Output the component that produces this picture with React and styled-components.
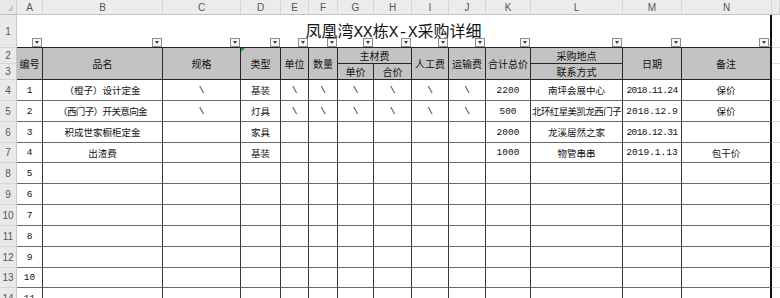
import React from "react";
import styled, { createGlobalStyle } from "styled-components";

// column widths A..N (N includes the thick 2px table edge)
const COLS = [26, 120, 78, 40, 28, 29, 36, 38, 37, 37, 45, 92, 59, 90];
const LETTERS = ["A", "B", "C", "D", "E", "F", "G", "H", "I", "J", "K", "L", "M", "N"];
const ROW_H = [21, 21, 21, 20, 21, 21, 21, 21, 21, 20, 21];
const NUMERIC = [0, 2, 4, 5, 6, 7, 8, 9, 10, 12];

const DATA = [
  ["1", "（橙子）设计定金", "\\", "基装", "\\", "\\", "\\", "\\", "\\", "\\", "2200", "南坪会展中心", "2018.11.24", "保价"],
  ["2", "（西门子）开关意向金", "\\", "灯具", "\\", "\\", "\\", "\\", "\\", "\\", "500", "北环红星美凯龙西门子", "2018.12.9", "保价"],
  ["3", "积成世家橱柜定金", "", "家具", "", "", "", "", "", "", "2000", "龙溪居然之家", "2018.12.31", ""],
  ["4", "出渣费", "", "基装", "", "", "", "", "", "", "1000", "物管串串", "2019.1.13", "包干价"],
  ...[5, 6, 7, 8, 9, 10, 11].map((n) => [String(n), "", "", "", "", "", "", "", "", "", "", "", "", ""]),
];

const GlobalStyle = createGlobalStyle`
  html, body {
    margin: 0;
    background: #fff;
    overflow: hidden;
  }
  body {
    font-family: "Noto Sans CJK SC", sans-serif;
  }
`;

const Sheet = styled.div`
  display: grid;
  grid-template-columns: 17px ${COLS.map((w) => w + "px").join(" ")} 1fr;
  grid-template-rows: 15px 33px 16px 16px ${ROW_H.map((h) => h + "px").join(" ")};
  width: 780px;
  height: 298px;
  overflow: hidden;
  > * {
    box-sizing: border-box;
    min-width: 0;
  }
`;

const Corner = styled.div`
  position: relative;
  background: #e9e9e9;
  border-right: 1px solid #cfcfcf;
  border-bottom: 1px solid #bdbdbd;
  &::after {
    content: "";
    position: absolute;
    right: 3px;
    bottom: 3px;
    border-left: 6px solid transparent;
    border-bottom: 6px solid #cacaca;
  }
`;

const ColHead = styled.div`
  display: flex;
  align-items: center;
  justify-content: center;
  background: #ececec;
  border-right: 1px solid #d6d6d6;
  border-bottom: 1px solid #c3c3c3;
  font: 10px "Liberation Sans", sans-serif;
  color: #555;
`;

const RowHead = styled.div`
  display: flex;
  align-items: center;
  justify-content: center;
  background: #e9e9e9;
  border-right: 1px solid #c6c6c6;
  border-bottom: 1px solid #d6d6d6;
  font: 10px "Liberation Sans", sans-serif;
  color: #555;
`;

const TitleCell = styled.div`
  grid-column: 2 / span 14;
  display: grid;
  grid-template-columns: ${COLS.slice(0, -1).map((w) => w + "px").join(" ")} 1fr;
  border-right: 2px solid #111;
  border-bottom: 1px solid #222;
`;

const Title = styled.div`
  grid-row: 1;
  grid-column: 1 / -1;
  align-self: end;
  justify-self: center;
  padding-bottom: 4px;
  font-family: "Liberation Mono", "Noto Sans CJK SC", monospace;
  font-size: 16px;
  line-height: 19px;
  color: #111;
`;

const FilterBtn = styled.span`
  grid-row: 1;
  grid-column: ${(p) => p.$col};
  align-self: end;
  justify-self: end;
  box-sizing: border-box;
  width: 10px;
  height: 9px;
  margin-right: 1px;
  display: flex;
  align-items: center;
  justify-content: center;
  background: #f6f6f6;
  border: 1px solid #8e8e8e;
  &::after {
    content: "";
    border-left: 2.5px solid transparent;
    border-right: 2.5px solid transparent;
    border-top: 3px solid #3c3c3c;
  }
`;

const HeadCell = styled.div`
  position: relative;
  grid-row: span ${(p) => p.$rs || 1};
  grid-column: span ${(p) => p.$cs || 1};
  display: flex;
  align-items: center;
  justify-content: center;
  background: #c3c3c3;
  border-right: ${(p) => (p.$last ? "2px solid #111" : "1px solid #262626")};
  border-bottom: 1px solid #262626;
  font-size: 10px;
  color: #111;
  white-space: nowrap;
  &::before {
    content: "";
    display: ${(p) => (p.$flag ? "block" : "none")};
    position: absolute;
    left: 0;
    top: 0;
    border-top: 4px solid #1f9d3f;
    border-right: 4px solid transparent;
  }
`;

const Cell = styled.div`
  display: flex;
  align-items: center;
  justify-content: center;
  border-right: ${(p) => (p.$last ? "2px solid #111" : "1px solid #3a3a3a")};
  border-bottom: 1px solid #6a6a6a;
  font-family: ${(p) =>
    p.$mono ? `"Liberation Mono", "Noto Sans CJK SC", monospace` : `"Noto Sans CJK SC", sans-serif`};
  font-size: 9.5px;
  letter-spacing: ${(p) => (p.$tight ? "-0.6px" : "0")};
  color: #111;
  white-space: nowrap;
  overflow: hidden;
`;

const Spare = styled.div`
  background: #fff;
  border-bottom: 1px solid #dcdcdc;
`;

export default function App() {
  return (
    <>
      <GlobalStyle />
      <Sheet>
        <Corner />
        {LETTERS.map((l) => (
          <ColHead key={l}>{l}</ColHead>
        ))}
        <ColHead />

        <RowHead>1</RowHead>
        <TitleCell>
          <Title>凤凰湾XX栋X-X采购详细</Title>
          {LETTERS.map((l, i) => (
            <FilterBtn key={l} $col={i + 1} />
          ))}
        </TitleCell>
        <Spare />

        <RowHead>2</RowHead>
        <HeadCell $rs={2}>编号</HeadCell>
        <HeadCell $rs={2}>品名</HeadCell>
        <HeadCell $rs={2}>规格</HeadCell>
        <HeadCell $rs={2} $flag>类型</HeadCell>
        <HeadCell $rs={2}>单位</HeadCell>
        <HeadCell $rs={2}>数量</HeadCell>
        <HeadCell $cs={2}>主材费</HeadCell>
        <HeadCell $rs={2}>人工费</HeadCell>
        <HeadCell $rs={2}>运输费</HeadCell>
        <HeadCell $rs={2}>合计总价</HeadCell>
        <HeadCell>采购地点</HeadCell>
        <HeadCell $rs={2}>日期</HeadCell>
        <HeadCell $rs={2} $last>备注</HeadCell>
        <Spare />

        <RowHead>3</RowHead>
        <HeadCell>单价</HeadCell>
        <HeadCell>合价</HeadCell>
        <HeadCell>联系方式</HeadCell>
        <Spare />

        {DATA.map((row, r) => (
          <React.Fragment key={r}>
            <RowHead>{r + 4}</RowHead>
            {row.map((v, c) => (
              <Cell
                key={c}
                $mono={NUMERIC.includes(c)}
                $last={c === 13}
                $tight={v.length > 9}
              >
                {v}
              </Cell>
            ))}
            <Spare />
          </React.Fragment>
        ))}
      </Sheet>
    </>
  );
}
